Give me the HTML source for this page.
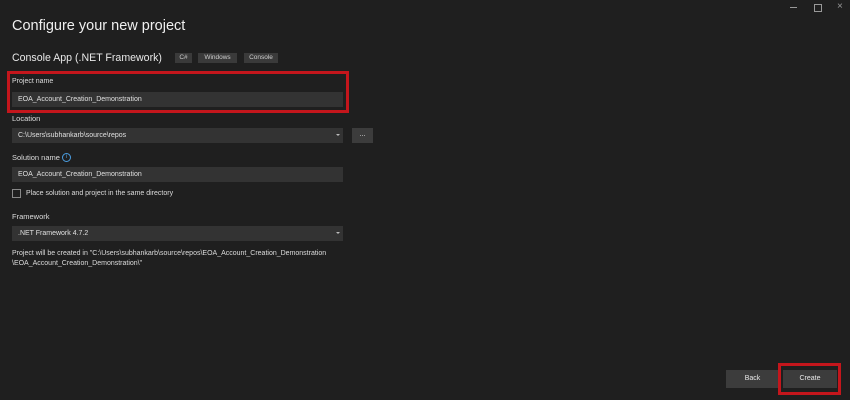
<!DOCTYPE html>
<html><head><style>
body{margin:0;width:850px;height:400px;background:#1f1f1f;font-family:"Liberation Sans",sans-serif;color:#e8e8e8;position:relative;overflow:hidden}
.a{position:absolute;white-space:nowrap}
.lbl{font-size:7.5px;color:#dcdcdc}
.inp{position:absolute;left:12px;width:331px;height:15px;background:#333;font-size:7px;line-height:15px;color:#e0e0e0;box-sizing:border-box;padding-left:6px}
.tag{position:absolute;top:53px;height:10px;background:#3a3a3a;font-size:6.5px;line-height:10px;color:#ccc;text-align:center}
.arr{position:absolute;right:3px;top:6px;width:0;height:0;border-left:2px solid transparent;border-right:2px solid transparent;border-top:2px solid #bbb}
.btn{position:absolute;top:370px;height:18px;background:#3c3c3c;font-size:7px;line-height:18px;text-align:center;color:#e8e8e8}
.red{position:absolute;border:3px solid #c4161c;box-sizing:border-box}
</style></head><body>
<div class="a" style="left:790px;top:7px;width:7px;height:1px;background:#999"></div>
<div class="a" style="left:814px;top:4px;width:6px;height:6px;border:1px solid #999"></div>
<div class="a" style="left:837px;top:1px;font-size:10px;color:#999">×</div>
<div class="a" style="left:12px;top:18px;font-size:14.5px;color:#f0f0f0">Configure your new project</div>
<div class="a" style="left:12px;top:52px;font-size:10.6px;color:#e8e8e8">Console App (.NET Framework)</div>
<div class="tag" style="left:175px;width:17px">C#</div>
<div class="tag" style="left:198px;width:39px">Windows</div>
<div class="tag" style="left:244px;width:34px">Console</div>
<div class="red" style="left:7px;top:71px;width:342px;height:42px"></div>
<div class="a lbl" style="left:12px;top:78px;font-size:7px">Project name</div>
<div class="inp" style="top:92px">EOA_Account_Creation_Demonstration</div>
<div class="a lbl" style="left:12px;top:114px">Location</div>
<div class="inp" style="top:128px">C:\Users\subhankarb\source\repos<div class="arr"></div></div>
<div class="a" style="left:352px;top:128px;width:21px;height:15px;background:#3c3c3c;font-size:7px;line-height:13px;text-align:center">...</div>
<div class="a lbl" style="left:12px;top:153px">Solution name</div>
<div class="a" style="left:62px;top:153px;width:7px;height:7px;border:1px solid #4a9de0;border-radius:50%;font-size:6px;line-height:7px;text-align:center;color:#4a9de0">i</div>
<div class="inp" style="top:167px">EOA_Account_Creation_Demonstration</div>
<div class="a" style="left:12px;top:189px;width:9px;height:9px;border:1px solid #888;box-sizing:border-box"></div>
<div class="a lbl" style="left:26px;top:190px;font-size:7px">Place solution and project in the same directory</div>
<div class="a lbl" style="left:12px;top:212px">Framework</div>
<div class="inp" style="top:226px">.NET Framework 4.7.2<div class="arr"></div></div>
<div class="a lbl" style="left:12px;top:249px;font-size:7px;line-height:10px">Project will be created in "C:\Users\subhankarb\source\repos\EOA_Account_Creation_Demonstration<br>\EOA_Account_Creation_Demonstration\"</div>
<div class="btn" style="left:726px;width:53px">Back</div>
<div class="btn" style="left:783px;width:54px">Create</div>
<div class="red" style="left:778px;top:363px;width:63px;height:32px"></div>
</body></html>
